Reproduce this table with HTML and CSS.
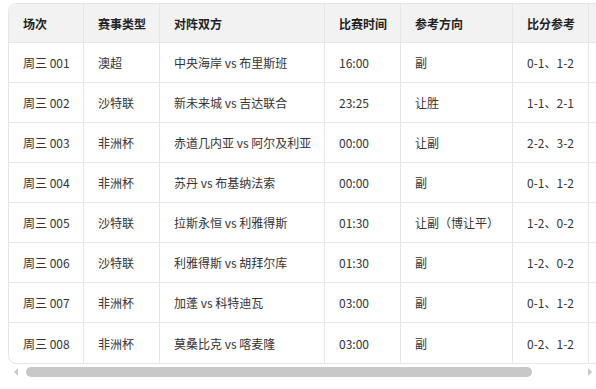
FILE: index.html
```html
<!DOCTYPE html>
<html lang="zh">
<head>
<meta charset="utf-8">
<link rel="stylesheet" href="styles.css">
</head>
<body>
<div class="wrap">
<table class="tbl">
<colgroup>
<col class="c1"><col class="c2"><col class="c3"><col class="c4"><col class="c5"><col class="c6"><col class="c7">
</colgroup>
<thead>
<tr><th>场次</th><th>赛事类型</th><th>对阵双方</th><th>比赛时间</th><th>参考方向</th><th>比分参考</th><th></th></tr>
</thead>
<tbody>
<tr><td>周三 001</td><td>澳超</td><td>中央海岸 vs 布里斯班</td><td>16:00</td><td>副</td><td>0-1、1-2</td><td></td></tr>
<tr><td>周三 002</td><td>沙特联</td><td>新未来城 vs 吉达联合</td><td>23:25</td><td>让胜</td><td>1-1、2-1</td><td></td></tr>
<tr><td>周三 003</td><td>非洲杯</td><td>赤道几内亚 vs 阿尔及利亚</td><td>00:00</td><td>让副</td><td>2-2、3-2</td><td></td></tr>
<tr><td>周三 004</td><td>非洲杯</td><td>苏丹 vs 布基纳法索</td><td>00:00</td><td>副</td><td>0-1、1-2</td><td></td></tr>
<tr><td>周三 005</td><td>沙特联</td><td>拉斯永恒 vs 利雅得斯</td><td>01:30</td><td>让副（博让平）</td><td>1-2、0-2</td><td></td></tr>
<tr><td>周三 006</td><td>沙特联</td><td>利雅得斯 vs 胡拜尔库</td><td>01:30</td><td>副</td><td>1-2、0-2</td><td></td></tr>
<tr><td>周三 007</td><td>非洲杯</td><td>加蓬 vs 科特迪瓦</td><td>03:00</td><td>副</td><td>0-1、1-2</td><td></td></tr>
<tr><td>周三 008</td><td>非洲杯</td><td>莫桑比克 vs 喀麦隆</td><td>03:00</td><td>副</td><td>0-2、1-2</td><td></td></tr>
</tbody>
</table>
</div>
<div class="hscroll">
  <span class="arrow left"></span>
  <div class="track"><div class="thumb"></div></div>
  <span class="arrow right"></span>
</div>
</body>
</html>
```
FILE: styles.css
```css
html, body {
  background: #fff;
}
body {
  margin: 3px 0 0 8px;
  font-family: "Noto Sans CJK SC", "Noto Sans", sans-serif;
  font-size: 12px;
  color: #333;
}
.wrap {
  width: 588px;
  overflow: hidden;
}
.tbl {
  border-collapse: separate;
  border-spacing: 0;
  border: 1px solid #e6e6e6;
  border-radius: 8px;
  table-layout: fixed;
  width: 648px;
}
.c1 { width: 75px; }
.c2 { width: 76px; }
.c3 { width: 165px; }
.c4 { width: 76px; }
.c5 { width: 112px; }
.c6 { width: 76px; }
.c7 { width: 68px; }
.tbl th, .tbl td {
  height: 40px;
  padding: 0 14px;
  text-align: left;
  white-space: nowrap;
  border-right: 1px solid #e6e6e6;
  border-bottom: 1px solid #e6e6e6;
  box-sizing: border-box;
}
.tbl th {
  height: 39px;
  background: #f2f2f2;
  font-weight: 700;
  color: #222;
}
.tbl th:last-child, .tbl td:last-child {
  border-right: none;
}
.tbl tbody tr:last-child td {
  border-bottom: none;
}
.tbl thead th:first-child { border-top-left-radius: 8px; }
.tbl thead th:last-child { border-top-right-radius: 8px; }

.hscroll {
  width: 588px;
  height: 15px;
  display: flex;
  align-items: center;
}
.arrow {
  width: 15px;
  height: 15px;
  flex: none;
  display: flex;
  align-items: center;
  justify-content: center;
}
.arrow::before {
  content: "";
  width: 0;
  height: 0;
  border-top: 4px solid transparent;
  border-bottom: 4px solid transparent;
}
.arrow.left::before {
  border-right: 4px solid #c8c8c8;
  margin-left: 1px;
}
.arrow.right::before {
  border-left: 4px solid #c8c8c8;
  margin-left: 2px;
}
.track {
  flex: 1;
  height: 15px;
  display: flex;
  align-items: center;
  padding-left: 3px;
}
.thumb {
  width: 506px;
  height: 10px;
  border-radius: 5px;
  background: #c8c8c8;
}
```
